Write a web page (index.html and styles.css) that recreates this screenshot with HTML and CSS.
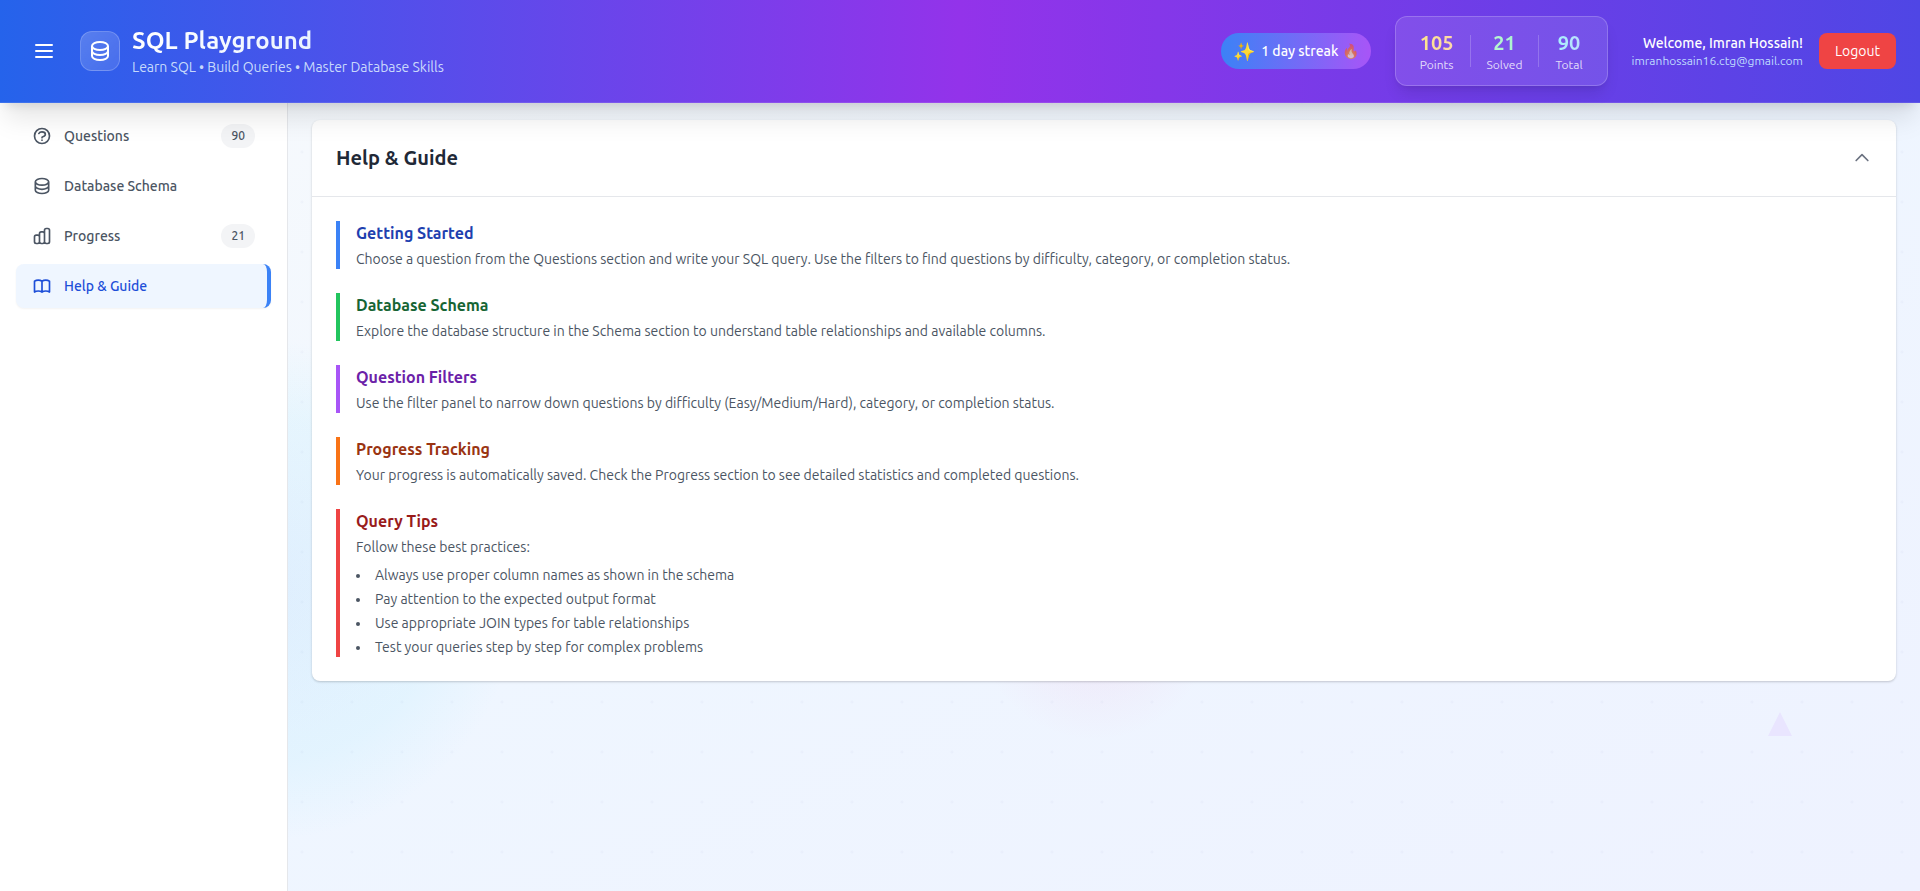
FILE: index.html
```html
<!DOCTYPE html>
<html lang="en">
<head>
<meta charset="utf-8">
<title>SQL Playground</title>
<link rel="stylesheet" href="styles.css">
</head>
<body>
<div class="app">
  <header class="topbar">
    <div class="brand">
      <button class="menu-btn" type="button" aria-label="Toggle menu">
        <svg class="icon-lg" viewBox="0 0 24 24"><path d="M4 6h16M4 12h16M4 18h16"/></svg>
      </button>
      <div class="brand-id">
        <span class="logo">
          <svg class="icon-lg" viewBox="0 0 24 24"><path d="M4 7v10c0 2.21 3.582 4 8 4s8-1.79 8-4V7M4 7c0 2.21 3.582 4 8 4s8-1.79 8-4M4 7c0-2.21 3.582-4 8-4s8 1.79 8 4m0 5c0 2.21-3.582 4-8 4s-8-1.79-8-4"/></svg>
        </span>
        <div>
          <h1 class="brand-title">SQL Playground</h1>
          <p class="brand-sub">Learn SQL • Build Queries • Master Database Skills</p>
        </div>
      </div>
    </div>
    <div class="status">
      <div class="streak"><span class="sparkle">✨</span><span>1 day streak <span class="fire">🔥</span></span></div>
      <div class="stats">
        <div class="stat"><div class="stat-value points">105</div><div class="stat-label">Points</div></div>
        <div class="stat-divider"></div>
        <div class="stat"><div class="stat-value solved">21</div><div class="stat-label">Solved</div></div>
        <div class="stat-divider"></div>
        <div class="stat"><div class="stat-value total">90</div><div class="stat-label">Total</div></div>
      </div>
      <div class="account">
        <div class="user">
          <div class="user-name">Welcome, Imran Hossain!</div>
          <div class="user-mail">imranhossain16.ctg@gmail.com</div>
        </div>
        <button class="logout" type="button">Logout</button>
      </div>
    </div>
  </header>

  <div class="layout">
    <nav class="sidebar">
      <button class="nav-item" type="button">
        <svg class="icon" viewBox="0 0 24 24"><path d="M8.228 9c.549-1.165 2.03-2 3.772-2 2.21 0 4 1.343 4 3 0 1.4-1.278 2.575-3.006 2.907-.542.104-.994.54-.994 1.093m0 3h.01M21 12a9 9 0 11-18 0 9 9 0 0118 0z"/></svg>
        <span>Questions</span><span class="badge">90</span>
      </button>
      <button class="nav-item" type="button">
        <svg class="icon" viewBox="0 0 24 24"><path d="M4 7v10c0 2.21 3.582 4 8 4s8-1.79 8-4V7M4 7c0 2.21 3.582 4 8 4s8-1.79 8-4M4 7c0-2.21 3.582-4 8-4s8 1.79 8 4m0 5c0 2.21-3.582 4-8 4s-8-1.79-8-4"/></svg>
        <span>Database Schema</span>
      </button>
      <button class="nav-item" type="button">
        <svg class="icon" viewBox="0 0 24 24"><path d="M9 19v-6a2 2 0 00-2-2H5a2 2 0 00-2 2v6a2 2 0 002 2h2a2 2 0 002-2zm0 0V9a2 2 0 012-2h2a2 2 0 012 2v10m-6 0a2 2 0 002 2h2a2 2 0 002-2m0 0V5a2 2 0 012-2h2a2 2 0 012 2v14a2 2 0 01-2 2h-2a2 2 0 01-2-2z"/></svg>
        <span>Progress</span><span class="badge">21</span>
      </button>
      <button class="nav-item active" type="button">
        <svg class="icon" viewBox="0 0 24 24"><path d="M12 6.253v13m0-13C10.832 5.477 9.246 5 7.5 5S4.168 5.477 3 6.253v13C4.168 18.477 5.754 18 7.5 18s3.332.477 4.5 1.253m0-13C13.168 5.477 14.754 5 16.5 5c1.747 0 3.332.477 4.5 1.253v13C19.832 18.477 18.247 18 16.5 18c-1.746 0-3.332.477-4.5 1.253"/></svg>
        <span>Help &amp; Guide</span>
      </button>
    </nav>

    <main class="content">
      <div class="triangle"></div>
      <section class="card">
        <div class="card-head">
          <h2 class="card-title">Help &amp; Guide</h2>
          <button class="collapse" type="button" aria-label="Collapse">
            <svg class="icon" viewBox="0 0 24 24"><path d="M5 15l7-7 7 7"/></svg>
          </button>
        </div>
        <div class="card-body">
          <article class="tip blue">
            <h3 class="tip-title">Getting Started</h3>
            <p class="tip-text">Choose a question from the Questions section and write your SQL query. Use the filters to find questions by difficulty, category, or completion status.</p>
          </article>
          <article class="tip green">
            <h3 class="tip-title">Database Schema</h3>
            <p class="tip-text">Explore the database structure in the Schema section to understand table relationships and available columns.</p>
          </article>
          <article class="tip purple">
            <h3 class="tip-title">Question Filters</h3>
            <p class="tip-text">Use the filter panel to narrow down questions by difficulty (Easy/Medium/Hard), category, or completion status.</p>
          </article>
          <article class="tip orange">
            <h3 class="tip-title">Progress Tracking</h3>
            <p class="tip-text">Your progress is automatically saved. Check the Progress section to see detailed statistics and completed questions.</p>
          </article>
          <article class="tip red">
            <h3 class="tip-title">Query Tips</h3>
            <p class="tip-text">Follow these best practices:</p>
            <ul class="tip-list">
              <li>Always use proper column names as shown in the schema</li>
              <li>Pay attention to the expected output format</li>
              <li>Use appropriate JOIN types for table relationships</li>
              <li>Test your queries step by step for complex problems</li>
            </ul>
          </article>
        </div>
      </section>
    </main>
  </div>
</div>
</body>
</html>
```
FILE: styles.css
```css
*, *::before, *::after { box-sizing: border-box; }
body, h1, h2, h3, p, ul { margin: 0; padding: 0; }
body {
  font-family: Ubuntu, "Noto Sans", "Open Sans", sans-serif;
  font-size: 14px;
  line-height: 20px;
  color: #4b5563;
}
button { font: inherit; color: inherit; border: 0; background: none; cursor: pointer; }
svg { display: block; fill: none; stroke: currentColor; stroke-width: 2; stroke-linecap: round; stroke-linejoin: round; flex: none; }
.icon { width: 20px; height: 20px; }
.icon-lg { width: 24px; height: 24px; }

.app {
  min-height: 100vh;
  display: flex;
  flex-direction: column;
  background:
    radial-gradient(circle at 2px 2px, rgba(100, 116, 180, 0.04) 1px, transparent 2px) 0 0 / 50px 50px,
    radial-gradient(circle at 1095px 620px, rgba(244, 114, 182, 0.12), transparent 120px),
    radial-gradient(circle at 270px 590px, rgba(96, 180, 250, 0.12), rgba(103, 220, 249, 0.09) 170px, transparent 250px),
    linear-gradient(to bottom right, #f8fafc, #eff6ff 50%, #eef2ff);
}

/* Header */
.topbar {
  position: relative;
  z-index: 2;
  display: flex;
  align-items: center;
  justify-content: space-between;
  padding: 16px 24px;
  color: #fff;
  background: linear-gradient(to right, #2563eb, #9333ea, #4f46e5);
  border-bottom: 1px solid rgba(255, 255, 255, 0.1);
  box-shadow: 0 20px 25px -5px rgba(0, 0, 0, 0.1), 0 8px 10px -6px rgba(0, 0, 0, 0.1);
}
.brand { display: flex; align-items: center; gap: 16px; }
.menu-btn { padding: 8px; border-radius: 8px; }
.brand-id { display: flex; align-items: center; gap: 12px; }
.logo {
  display: grid;
  place-items: center;
  width: 40px;
  height: 40px;
  border-radius: 12px;
  border: 1px solid rgba(255, 255, 255, 0.2);
  background: linear-gradient(to bottom right, rgba(255, 255, 255, 0.2), rgba(255, 255, 255, 0.1));
}
.brand-title {
  font-size: 24px;
  line-height: 32px;
  font-weight: 700;
  color: transparent;
  background: linear-gradient(to right, #fff, #dbeafe);
  -webkit-background-clip: text;
  background-clip: text;
}
.brand-sub { color: rgba(219, 234, 254, 0.9); }
.status { display: flex; align-items: center; gap: 24px; }
.streak {
  display: flex;
  align-items: center;
  gap: 6px;
  padding: 8px 12px;
  border-radius: 18px;
  font-weight: 500;
  background: linear-gradient(to right, #3b82f6, #a855f7);
}
.sparkle { font-size: 18px; }
.fire { opacity: 0.6; }
.stats {
  display: flex;
  align-items: center;
  gap: 16px;
  padding: 12px 24px;
  border-radius: 12px;
  border: 1px solid rgba(255, 255, 255, 0.2);
  background: rgba(255, 255, 255, 0.1);
  box-shadow: 0 10px 15px -3px rgba(0, 0, 0, 0.1), 0 4px 6px -4px rgba(0, 0, 0, 0.1);
}
.stat { text-align: center; }
.stat-value {
  font-size: 20px;
  line-height: 28px;
  font-weight: 700;
  color: transparent;
  -webkit-background-clip: text;
  background-clip: text;
}
.stat-label { font-size: 12px; line-height: 16px; color: rgba(255, 255, 255, 0.8); }
.points { background-image: linear-gradient(to right, #fde68a, #fed7aa); }
.solved { background-image: linear-gradient(to right, #bbf7d0, #a7f3d0); }
.total { background-image: linear-gradient(to right, #a5f3fc, #bfdbfe); }
.stat-divider { width: 1px; height: 32px; background: rgba(255, 255, 255, 0.2); }
.account { display: flex; align-items: center; gap: 16px; }
.user { text-align: right; }
.user-name { font-weight: 500; }
.user-mail { font-size: 12px; line-height: 16px; color: #bfdbfe; }
.logout { padding: 8px 16px; border-radius: 8px; background: #ef4444; color: #fff; }

/* Page body */
.layout { flex: 1; display: flex; }
.sidebar {
  flex: none;
  width: 288px;
  display: flex;
  flex-direction: column;
  gap: 6px;
  padding: 11px 16px;
  background: #fff;
  border-right: 1px solid #e5e7eb;
}
.nav-item {
  display: flex;
  align-items: center;
  gap: 12px;
  min-height: 44px;
  padding: 0 16px;
  border-radius: 8px;
  font-weight: 500;
  text-align: left;
}
.nav-item.active {
  color: #1d4ed8;
  background: #eff6ff;
  border-right: 4px solid #3b82f6;
  box-shadow: 0 1px 2px rgba(0, 0, 0, 0.05);
}
.badge {
  margin-left: auto;
  padding: 4px 10px;
  border-radius: 12px;
  font-size: 12px;
  line-height: 16px;
  background: #f3f4f6;
}
.content { flex: 1; min-width: 0; position: relative; padding: 17px 24px 24px; }
.triangle {
  position: absolute;
  right: 128px;
  bottom: 155px;
  width: 24px;
  height: 24px;
  background: #e9e5ff;
  clip-path: polygon(50% 0, 100% 100%, 0 100%);
}

/* Help card */
.card {
  position: relative;
  background: #fff;
  border-radius: 8px;
  box-shadow: 0 1px 3px rgba(0, 0, 0, 0.1), 0 1px 2px rgba(0, 0, 0, 0.1);
}
.card-head {
  display: flex;
  align-items: center;
  justify-content: space-between;
  padding: 24px;
  border-bottom: 1px solid #e5e7eb;
}
.card-title { font-size: 20px; line-height: 28px; font-weight: 700; color: #1f2937; }
.collapse { padding: 0; color: #6b7280; }
.card-body { display: flex; flex-direction: column; gap: 24px; padding: 24px; }
.tip { padding-left: 16px; border-left: 4px solid; }
.tip-title { margin-bottom: 4px; font-size: 16px; line-height: 24px; font-weight: 700; }
.tip-text { color: #4b5563; }
.tip-list { display: flex; flex-direction: column; gap: 4px; margin-top: 8px; list-style: disc inside; }
.blue { border-color: #3b82f6; }
.blue .tip-title { color: #1e40af; }
.green { border-color: #22c55e; }
.green .tip-title { color: #166534; }
.purple { border-color: #a855f7; }
.purple .tip-title { color: #6b21a8; }
.orange { border-color: #f97316; }
.orange .tip-title { color: #9a3412; }
.red { border-color: #ef4444; }
.red .tip-title { color: #991b1b; }
```
